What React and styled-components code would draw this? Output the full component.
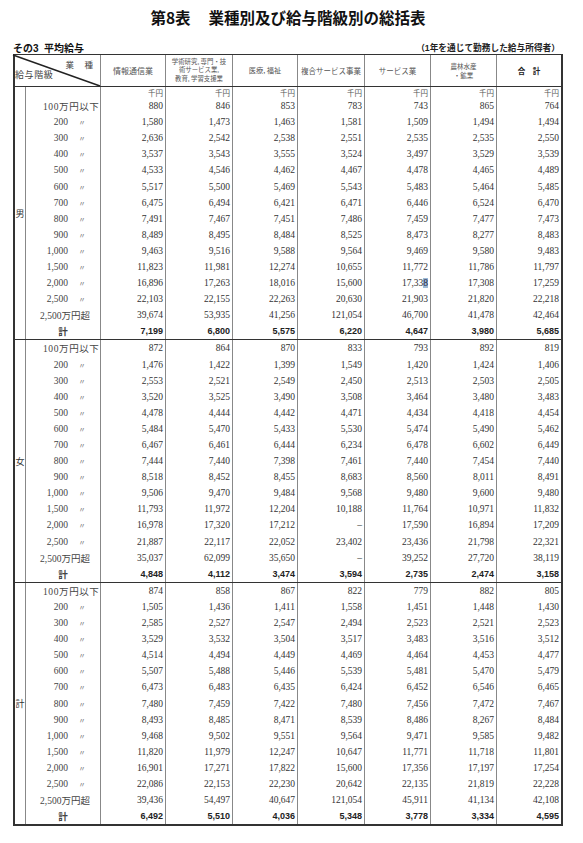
import React from 'react';
import styled, { createGlobalStyle } from 'styled-components';

const GlobalStyle = createGlobalStyle`
  html, body {
    margin: 0;
    padding: 0;
    background: #fff;
  }
  body {
    font-family: "Noto Sans CJK JP", sans-serif;
    color: #333;
  }
`;

const COLS = '65px 67px 65px 67px 66px 66px 64px';

const HEADERS = [
  { lines: ['情報通信業'], size: 8 },
  { lines: ['学術研究, 専門・技', '術サービス業,', '教育, 学習支援業'], size: 6.4 },
  { lines: ['医療, 福祉'], size: 7.2 },
  { lines: ['複合サービス事業'], size: 7.5 },
  { lines: ['サービス業'], size: 7.5 },
  { lines: ['農林水産', '・鉱業'], size: 6.5 },
  { lines: ['合　計'], size: 7.5, bold: true },
];

const BANDS = [
  { label: '100万円以下', kind: 'low' },
  { label: '200', kind: 'band' },
  { label: '300', kind: 'band' },
  { label: '400', kind: 'band' },
  { label: '500', kind: 'band' },
  { label: '600', kind: 'band' },
  { label: '700', kind: 'band' },
  { label: '800', kind: 'band' },
  { label: '900', kind: 'band' },
  { label: '1,000', kind: 'band' },
  { label: '1,500', kind: 'band' },
  { label: '2,000', kind: 'band' },
  { label: '2,500', kind: 'band' },
  { label: '2,500万円超', kind: 'high' },
  { label: '計', kind: 'total' },
];

const SECTIONS = [
  {
    name: '男',
    units: true,
    rows: [
      ['880', '846', '853', '783', '743', '865', '764'],
      ['1,580', '1,473', '1,463', '1,581', '1,509', '1,494', '1,494'],
      ['2,636', '2,542', '2,538', '2,551', '2,535', '2,535', '2,550'],
      ['3,537', '3,543', '3,555', '3,524', '3,497', '3,529', '3,539'],
      ['4,533', '4,546', '4,462', '4,467', '4,478', '4,465', '4,489'],
      ['5,517', '5,500', '5,469', '5,543', '5,483', '5,464', '5,485'],
      ['6,475', '6,494', '6,421', '6,471', '6,446', '6,524', '6,470'],
      ['7,491', '7,467', '7,451', '7,486', '7,459', '7,477', '7,473'],
      ['8,489', '8,495', '8,484', '8,525', '8,473', '8,277', '8,483'],
      ['9,463', '9,516', '9,588', '9,564', '9,469', '9,580', '9,483'],
      ['11,823', '11,981', '12,274', '10,655', '11,772', '11,786', '11,797'],
      ['16,896', '17,263', '18,016', '15,600', '17,338*', '17,308', '17,259'],
      ['22,103', '22,155', '22,263', '20,630', '21,903', '21,820', '22,218'],
      ['39,674', '53,935', '41,256', '121,054', '46,700', '41,478', '42,464'],
      ['7,199', '6,800', '5,575', '6,220', '4,647', '3,980', '5,685'],
    ],
  },
  {
    name: '女',
    rows: [
      ['872', '864', '870', '833', '793', '892', '819'],
      ['1,476', '1,422', '1,399', '1,549', '1,420', '1,424', '1,406'],
      ['2,553', '2,521', '2,549', '2,450', '2,513', '2,503', '2,505'],
      ['3,520', '3,525', '3,490', '3,508', '3,464', '3,480', '3,483'],
      ['4,478', '4,444', '4,442', '4,471', '4,434', '4,418', '4,454'],
      ['5,484', '5,470', '5,433', '5,530', '5,474', '5,490', '5,462'],
      ['6,467', '6,461', '6,444', '6,234', '6,478', '6,602', '6,449'],
      ['7,444', '7,440', '7,398', '7,461', '7,440', '7,454', '7,440'],
      ['8,518', '8,452', '8,455', '8,683', '8,560', '8,011', '8,491'],
      ['9,506', '9,470', '9,484', '9,568', '9,480', '9,600', '9,480'],
      ['11,793', '11,972', '12,204', '10,188', '11,764', '10,971', '11,832'],
      ['16,978', '17,320', '17,212', '–', '17,590', '16,894', '17,209'],
      ['21,887', '22,117', '22,052', '23,402', '23,436', '21,798', '22,321'],
      ['35,037', '62,099', '35,650', '–', '39,252', '27,720', '38,119'],
      ['4,848', '4,112', '3,474', '3,594', '2,735', '2,474', '3,158'],
    ],
  },
  {
    name: '計',
    rows: [
      ['874', '858', '867', '822', '779', '882', '805'],
      ['1,505', '1,436', '1,411', '1,558', '1,451', '1,448', '1,430'],
      ['2,585', '2,527', '2,547', '2,494', '2,523', '2,521', '2,523'],
      ['3,529', '3,532', '3,504', '3,517', '3,483', '3,516', '3,512'],
      ['4,514', '4,494', '4,449', '4,469', '4,464', '4,453', '4,477'],
      ['5,507', '5,488', '5,446', '5,539', '5,481', '5,470', '5,479'],
      ['6,473', '6,483', '6,435', '6,424', '6,452', '6,546', '6,465'],
      ['7,480', '7,459', '7,422', '7,480', '7,456', '7,472', '7,467'],
      ['8,493', '8,485', '8,471', '8,539', '8,486', '8,267', '8,484'],
      ['9,468', '9,502', '9,551', '9,564', '9,471', '9,585', '9,482'],
      ['11,820', '11,979', '12,247', '10,647', '11,771', '11,718', '11,801'],
      ['16,901', '17,271', '17,822', '15,600', '17,356', '17,197', '17,254'],
      ['22,086', '22,153', '22,230', '20,642', '22,135', '21,819', '22,228'],
      ['39,436', '54,497', '40,647', '121,054', '45,911', '41,134', '42,108'],
      ['6,492', '5,510', '4,036', '5,348', '3,778', '3,334', '4,595'],
    ],
  },
];

// a trailing * marks the cell with the selected last digit
const renderValue = (v) => {
  if (!v.endsWith('*')) return v;
  const s = v.slice(0, -1);
  return (
    <>
      {s.slice(0, -1)}
      <Mark>{s.slice(-1)}</Mark>
    </>
  );
};

const App = () => {
  return (
    <Page>
      <GlobalStyle />
      <Title>
        <span>第8表</span>
        <span>業種別及び給与階級別の総括表</span>
      </Title>
      <SubHeader>
        <SubTitle>その3&nbsp;&nbsp;平均給与</SubTitle>
        <Note>（1年を通じて勤務した給与所得者）</Note>
      </SubHeader>
      <Frame>
        <HeaderRow>
          <Corner>
            <Diagonal viewBox="0 0 86 31" preserveAspectRatio="none">
              <line x1="-2" y1="0" x2="86" y2="31" stroke="#222" strokeWidth="1.4" vectorEffect="non-scaling-stroke" />
            </Diagonal>
            <CornerTop>業　&nbsp;種</CornerTop>
            <CornerBottom>給与階級</CornerBottom>
          </Corner>
          {HEADERS.map((h, i) => (
            <HeadCell key={i} $size={h.size} $bold={h.bold}>
              {h.lines.map((l) => (
                <span key={l}>{l}</span>
              ))}
            </HeadCell>
          ))}
        </HeaderRow>
        {SECTIONS.map((sec) => (
          <Section key={sec.name}>
            <SexCell>{sec.name}</SexCell>
            <SectionBody>
              {sec.units && (
                <UnitRow>
                  <LabelCell />
                  {HEADERS.map((_, i) => (
                    <UnitCell key={i}>千円</UnitCell>
                  ))}
                </UnitRow>
              )}
              {sec.rows.map((vals, r) => {
                const band = BANDS[r];
                const isTotal = band.kind === 'total';
                return (
                  <Row key={r}>
                    <LabelCell $kind={band.kind}>
                      {band.kind === 'band' ? (
                        <>
                          <BandNum>{band.label}</BandNum>
                          <Ditto>〃</Ditto>
                        </>
                      ) : (
                        band.label
                      )}
                    </LabelCell>
                    {vals.map((v, c) => (
                      <NumCell key={c} $total={isTotal}>
                        {renderValue(v)}
                      </NumCell>
                    ))}
                  </Row>
                );
              })}
            </SectionBody>
          </Section>
        ))}
      </Frame>
    </Page>
  );
};

export default App;

const Page = styled.div`
  width: 583px;
  height: 843px;
  box-sizing: border-box;
  padding: 7px 20px 0 13px;
  background: #fff;
  overflow: hidden;
`;

const Title = styled.h1`
  display: flex;
  justify-content: center;
  gap: 18px;
  margin: 0;
  height: 20px;
  line-height: 20px;
  font-size: 15.5px;
  font-weight: 700;
  color: #111;
  font-family: "Noto Sans CJK JP", sans-serif;
`;

const SubHeader = styled.div`
  display: flex;
  justify-content: space-between;
  align-items: center;
  margin-top: 16px;
  height: 11px;
  line-height: 11px;
`;

const SubTitle = styled.span`
  font-size: 10px;
  font-weight: 700;
  color: #111;
  font-family: "Liberation Sans", "Noto Sans CJK JP", sans-serif;
`;

const Note = styled.span`
  margin-right: 3px;
  font-size: 8.7px;
  font-weight: 700;
  color: #222;
  font-family: "Liberation Sans", "Noto Sans CJK JP", sans-serif;
`;

const Frame = styled.div`
  width: 550px;
  box-sizing: border-box;
  border-top: 1px solid #333;
  border-left: 2px solid #333;
  border-right: 2px solid #333;
  border-bottom: 2px solid #333;
`;

const HeaderRow = styled.div`
  display: grid;
  grid-template-columns: 86px ${COLS};
  height: 32px;
  box-sizing: border-box;
  border-bottom: 1px solid #333;
`;

const Corner = styled.div`
  position: relative;
  box-sizing: border-box;
  border-right: 1px solid #888;
  padding-top: 5px;
  color: #444;
  font-size: 8.5px;
`;

const Diagonal = styled.svg`
  position: absolute;
  inset: 0;
  width: 100%;
  height: 100%;
  overflow: visible;
`;

const CornerTop = styled.div`
  line-height: 9px;
  text-align: right;
  padding-right: 7px;
`;

const CornerBottom = styled.div`
  line-height: 11px;
  letter-spacing: 0.6px;
  font-size: 9px;
`;

const HeadCell = styled.div`
  display: flex;
  flex-direction: column;
  align-items: center;
  justify-content: center;
  box-sizing: border-box;
  border-right: 1px solid #888;
  font-size: ${(p) => p.$size}px;
  line-height: ${(p) => p.$size + 2}px;
  font-weight: ${(p) => (p.$bold ? 700 : 400)};
  color: ${(p) => (p.$bold ? '#222' : '#555')};
  text-align: center;
  white-space: nowrap;
  &:last-child {
    border-right: none;
  }
`;

const Section = styled.div`
  display: flex;
  border-bottom: 1px solid #333;
  &:last-child {
    border-bottom: none;
  }
`;

const SexCell = styled.div`
  width: 11px;
  flex: none;
  box-sizing: border-box;
  border-right: 1px solid #888;
  display: flex;
  align-items: center;
  justify-content: center;
  font-size: 9px;
  color: #333;
`;

const SectionBody = styled.div`
  flex: 1;
  display: flex;
  flex-direction: column;
`;

const UnitRow = styled.div`
  display: grid;
  grid-template-columns: 75px ${COLS};
  height: 11px;
`;

const Row = styled.div`
  display: grid;
  grid-template-columns: 75px ${COLS};
  height: 16.1px;
`;

const BaseCell = styled.div`
  box-sizing: border-box;
  border-right: 1px solid #888;
  display: flex;
  align-items: center;
  &:last-child {
    border-right: none;
  }
`;

const LabelCell = styled(BaseCell)`
  font-family: "Liberation Serif", "Noto Sans CJK JP", serif;
  font-size: 9.5px;
  color: #444;
  white-space: nowrap;
  justify-content: ${(p) => (p.$kind === 'total' ? 'center' : 'flex-start')};
  padding-left: ${(p) => (p.$kind === 'low' ? 17 : p.$kind === 'high' ? 14 : 0)}px;
  letter-spacing: ${(p) => (p.$kind === 'low' ? 0.6 : 0)}px;
  font-weight: ${(p) => (p.$kind === 'total' ? 700 : 400)};
`;

const BandNum = styled.span`
  width: 42px;
  text-align: right;
`;

const Ditto = styled.span`
  width: 12px;
  margin-left: 8px;
  text-align: center;
  font-size: 7px;
  color: #666;
`;

const UnitCell = styled(BaseCell)`
  justify-content: flex-end;
  padding-right: 2px;
  font-size: 7.5px;
  color: #555;
`;

const NumCell = styled(BaseCell)`
  justify-content: flex-end;
  padding-right: 2px;
  font-family: ${(p) => (p.$total ? '"Liberation Sans", sans-serif' : '"Liberation Serif", serif')};
  font-size: ${(p) => (p.$total ? 9 : 9.5)}px;
  font-weight: ${(p) => (p.$total ? 700 : 400)};
  color: ${(p) => (p.$total ? '#222' : '#333')};
  white-space: nowrap;
`;

const Mark = styled.span`
  background: #9cbad6;
  color: #224;
`;
